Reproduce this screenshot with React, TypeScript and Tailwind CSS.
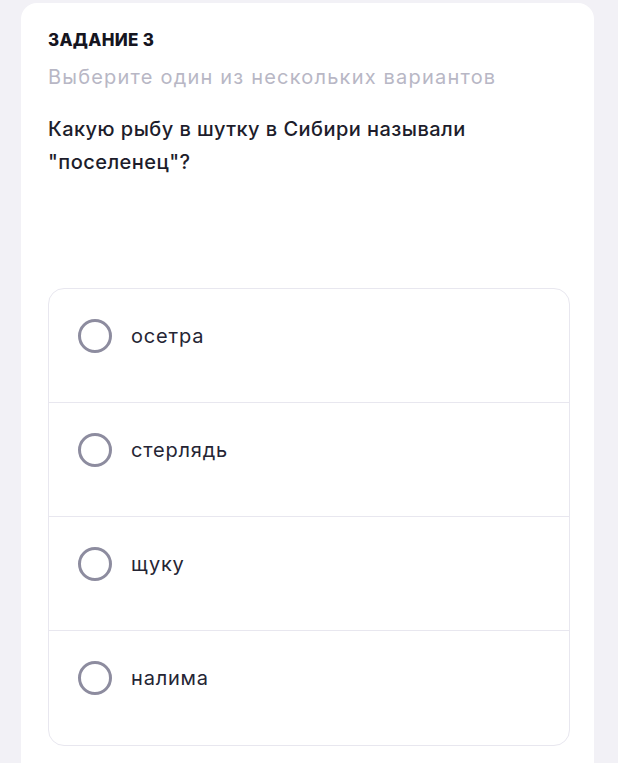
const OPTIONS = ['осетра', 'стерлядь', 'щуку', 'налима']

export default function App() {
  return (
    <div className="min-h-[763px] bg-[#f2f1f6] pt-[3px] pl-[21px] pr-[24px] font-['Inter','Noto_Sans',sans-serif]">
      <div className="w-[573px] min-h-[760px] rounded-t-2xl bg-white pl-[27px] pr-[24px] pt-[27px]">
        <div className="text-[17px] leading-[20px] font-extrabold tracking-[0.3px] text-[#15151f]">ЗАДАНИЕ 3</div>
        <div className="mt-[13px] text-[20px] leading-[28px] tracking-[1.2px] text-[#b8b7c5]">
          Выберите один из нескольких вариантов
        </div>
        <div className="mt-[22px] text-[20px] leading-[33px] font-medium tracking-[0.45px] text-[#1d1d2b]">
          Какую рыбу в шутку в Сибири называли "поселенец"?
        </div>

        <div className="mt-[109px] rounded-2xl border border-[#e8e7ef] overflow-hidden">
          {OPTIONS.map((label, i) => (
            <OptionRow key={label} label={label} last={i === OPTIONS.length - 1} />
          ))}
        </div>
      </div>
    </div>
  )
}

function OptionRow({ label, last }: { label: string; last: boolean }) {
  return (
    <label
      className={
        'flex items-start h-[114px] pl-[29px] pt-[30px] cursor-pointer ' +
        (last ? '' : 'border-b border-[#e8e7ef]')
      }
    >
      <span className="w-[34px] h-[34px] rounded-full border-[3px] border-[#8d8c9f] flex-shrink-0" />
      <span className="ml-[19px] text-[20px] leading-[34px] tracking-[0.8px] text-[#252534]">{label}</span>
    </label>
  )
}
